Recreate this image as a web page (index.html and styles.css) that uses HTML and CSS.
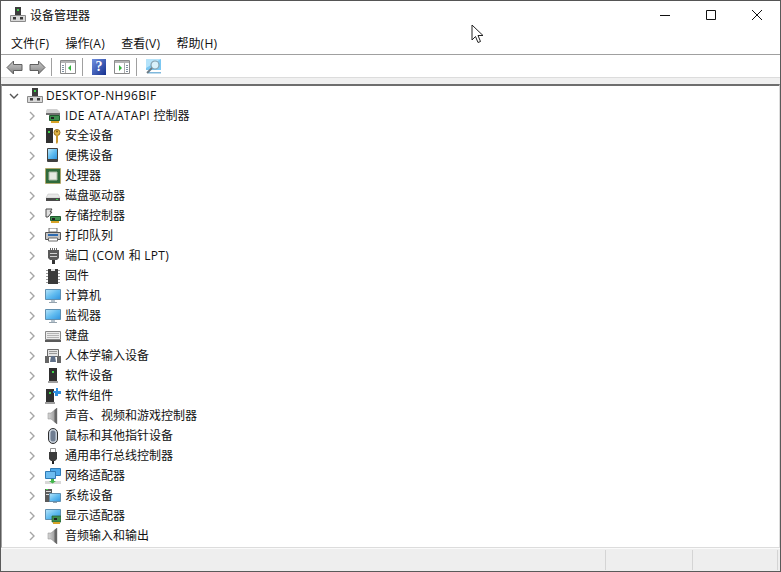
FILE: index.html
```html
<!DOCTYPE html>
<html lang="zh-CN">
<head>
<meta charset="utf-8">
<title>设备管理器</title>
<link rel="stylesheet" href="styles.css">
</head>
<body>
<svg class="sprite" width="0" height="0">
<defs>
<linearGradient id="gArrow" x1="0" y1="0" x2="0" y2="1"><stop offset="0" stop-color="#c4c4c4"/><stop offset=".5" stop-color="#a8a8a8"/><stop offset="1" stop-color="#7c7c7c"/></linearGradient>
<linearGradient id="gScreen" x1="0" y1="0" x2="1" y2="1"><stop offset="0" stop-color="#b9e6fb"/><stop offset=".5" stop-color="#63bdf0"/><stop offset="1" stop-color="#2f94e0"/></linearGradient>
<linearGradient id="gSpk" x1="0" y1="0" x2="1" y2="0"><stop offset="0" stop-color="#d8d8d8"/><stop offset="1" stop-color="#8a8a8a"/></linearGradient>
<linearGradient id="gHelp" x1="0" y1="0" x2="1" y2="1"><stop offset="0" stop-color="#6f8fe0"/><stop offset="1" stop-color="#15308f"/></linearGradient>
<symbol id="chev" viewBox="0 0 10 10"><path d="M3 1l4 4-4 4" fill="none" stroke="#a6a6a6" stroke-width="1.400"/></symbol>
<symbol id="pc" viewBox="0 0 16 16"><path d="M5 0h6v8H5z" fill="#3d3d3d"/><path d="M7 2h2v2H7z" fill="#3fd24a"/><path d="M.5 8.500h15v6H.5z" fill="#d8d8d8" stroke="#8a8a8a"/><path d="M3 10h3v2.500H3zM10 10h3v2.500h-3z" fill="#3a3a3a"/></symbol>
<symbol id="ide" viewBox="0 0 16 16"><path d="M2 1h10l3 3v1H1V3z" fill="#d0d0d0"/><path d="M1 5h14v2H1z" fill="#707070"/><path d="M4.500 7.500h10v5h-10z" fill="#3f8f4f" stroke="#205c2f"/><path d="M6 9h3v2H6z" fill="#222"/><path d="M6 13h8v2H6z" fill="#d8a428"/></symbol>
<symbol id="sec" viewBox="0 0 16 16"><path d="M1 0h7v15H1z" fill="#2f2f2f"/><path d="M3 3h2v2H3z" fill="#3fd24a"/><circle cx="12" cy="4.500" r="3" fill="#e2b445" stroke="#96701e"/><circle cx="12" cy="3.500" r="1" fill="#7a5a14"/><path d="M11 7h2v7l-1 2-1-1z" fill="#c9962c"/></symbol>
<symbol id="port" viewBox="0 0 16 16"><rect x="2" y="0" width="11" height="14" rx="1" fill="#404040"/><path d="M3 1h9v10H3z" fill="url(#gScreen)"/></symbol>
<symbol id="cpu" viewBox="0 0 16 16"><path d="M.5.500h15v15H.5z" fill="#2f6a3b" stroke="#c09a3c" stroke-dasharray="1 1"/><path d="M1.500 1.500h13v13h-13z" fill="#2f6a3b"/><path d="M4 4h8v8H4z" fill="#e6eae2" stroke="#a8b8a5"/></symbol>
<symbol id="disk" viewBox="0 0 16 16"><path d="M3 6h10l2 4H1z" fill="#e8e8e8" stroke="#bbb" stroke-width=".5"/><path d="M1 10h14v3H1z" fill="#4a4a4a"/><path d="M11 11h2v1h-2z" fill="#3fd24a"/></symbol>
<symbol id="stor" viewBox="0 0 16 16"><path d="M1 1h6L5 4h2L3 9H1z" fill="#e0e0e0" stroke="#4a4a4a"/><path d="M5.500 8.500h10v4h-10z" fill="#3f8f4f" stroke="#205c2f"/><path d="M6 13h8v2H6z" fill="#d8a428"/><path d="M7 10h3v2H7z" fill="#222"/></symbol>
<symbol id="print" viewBox="0 0 16 16"><path d="M4 0h8v4H4z" fill="#fff" stroke="#6a6a6a"/><path d="M.5 4.500h15v7h-15z" fill="#c4c4c4" stroke="#555"/><path d="M3 6h10v2H3z" fill="#2e6bb0"/><path d="M3.500 10h9v3h-9z" fill="#fff" stroke="#6a6a6a"/></symbol>
<symbol id="com" viewBox="0 0 16 16"><path d="M5 0h1v2H5zM7 0h1v2H7zM9 0h1v2H9zM11 0h1v2h-1z" fill="#666"/><path d="M3 2h11v8l-2 2H5l-2-2z" fill="#5a5a5a"/><path d="M5 5h7v1H5zM5 8h7v1H5z" fill="#d0d0d0"/><path d="M7 12h3v4H7z" fill="#333"/></symbol>
<symbol id="fw" viewBox="0 0 16 16"><path d="M3 1h10v15H3z" fill="#3a3a3a"/><path d="M1 2h2v1H1zM1 5h2v1H1zM1 8h2v1H1zM1 11h2v1H1zM1 14h2v1H1zM13 2h2v1h-2zM13 5h2v1h-2zM13 8h2v1h-2zM13 11h2v1h-2zM13 14h2v1h-2z" fill="#9a9a9a"/><path d="M6 1h4v2H6z" fill="#e0e0e0"/></symbol>
<symbol id="mon" viewBox="0 0 16 16"><path d="M.5 1.500h15v10H.5z" fill="url(#gScreen)" stroke="#5f8fb0"/><path d="M6 12h4v2H6z" fill="#b5c2cc"/><path d="M4 14h8v1H4z" fill="#95a3ae"/></symbol>
<symbol id="kbd" viewBox="0 0 16 16"><path d="M.5 3.500h15v8H.5z" fill="#ececec" stroke="#888"/><path d="M2 5h12v1H2zM2 7h12v1H2zM2 9h12v1H2z" fill="#b4b4b4"/><path d="M0 12h16v2H0z" fill="#5a5a5a"/></symbol>
<symbol id="hid" viewBox="0 0 16 16"><path d="M2.500 1.500h11v7h-11z" fill="#e4e4e4" stroke="#6a6a6a"/><path d="M4 3h8v1H4zM4 5h8v1H4z" fill="#999"/><path d="M0 8h4v7H0zM12 8h4v7h-4z" fill="#666"/><path d="M6 8h4l1 6H5z" fill="#5f6f88"/></symbol>
<symbol id="sw" viewBox="0 0 16 16"><path d="M4 0h8v13H4z" fill="#2f2f2f"/><path d="M7 3h2v2H7z" fill="#3fd24a"/><path d="M3 13h10v2H3z" fill="#a0a0a0"/></symbol>
<symbol id="swc" viewBox="0 0 16 16"><path d="M1 1h8v13H1z" fill="#2f2f2f"/><path d="M4 4h2v2H4z" fill="#3fd24a"/><path d="M0 14h10v2H0z" fill="#a0a0a0"/><path d="M11 0h2v3h3v3h-3v2h-3V5H8V3h3z" fill="#2f8fe0"/></symbol>
<symbol id="spk" viewBox="0 0 16 16"><path d="M3 5h3l6-5v16l-6-5H3z" fill="url(#gSpk)" stroke="#888" stroke-width=".5"/><path d="M9.500 2L12 0v16l-2.500-2z" fill="#666"/></symbol>
<symbol id="mouse" viewBox="0 0 16 16"><rect x="3.500" y=".500" width="9" height="15" rx="4.500" fill="#c8d0da" stroke="#2f2f2f"/><rect x="5.500" y="2.500" width="5" height="11" rx="2.500" fill="#6f7d91"/></symbol>
<symbol id="usb" viewBox="0 0 16 16"><path d="M5.500.5h5v4h-5z" fill="#fff" stroke="#777" stroke-width=".8"/><path d="M4 4h8v7l-2 2H6l-2-2z" fill="#3b3b3b"/><path d="M7 13h2v3H7z" fill="#222"/></symbol>
<symbol id="net" viewBox="0 0 16 16"><path d="M5.500.5h10v7h-10z" fill="#4ba8ea" stroke="#2f7ab5"/><path d="M.5 3.500h10v7h-10z" fill="#6cbcf0" stroke="#2f7ab5"/><path d="M0 13h16v3H0z" fill="#d8d8d8"/><path d="M6 11h3v2h2l-3.500 2.500L4 13h2z" fill="#42b54a"/></symbol>
<symbol id="sys" viewBox="0 0 16 16"><path d="M0 1h7v13H0z" fill="#5a5a5a"/><path d="M1 3h5v1H1zM1 6h3v1H1z" fill="#ddd"/><path d="M1 1h2v1H1z" fill="#3fd24a"/><path d="M4.500 5.500h11v8h-11z" fill="url(#gScreen)" stroke="#5f8fb0"/><path d="M8 14h4v1H8z" fill="#95a3ae"/></symbol>
<symbol id="gpu" viewBox="0 0 16 16"><path d="M.5 1.500h15v10H.5z" fill="url(#gScreen)" stroke="#5f8fb0"/><path d="M7 8h9v6H7z" fill="#3f8f4f" stroke="#205c2f" stroke-width=".7"/><path d="M9 10h3v2H9z" fill="#222"/><path d="M8 14h7v2H8z" fill="#d8a428"/></symbol>
<symbol id="back" viewBox="0 0 17 15"><path d="M7.500 1L1 7.500 7.500 14v-3.500h8.500v-6H7.500z" fill="url(#gArrow)" stroke="#5f5f5f"/></symbol>
<symbol id="fwd" viewBox="0 0 17 15"><path d="M9.500 1L16 7.500 9.500 14v-3.500H1v-6h8.500z" fill="url(#gArrow)" stroke="#5f5f5f"/></symbol>
<symbol id="pane" viewBox="0 0 16 16"><path d="M.5 1.500h15v13H.5z" fill="#fff" stroke="#8a8a8a"/><path d="M1 2h14v2H1z" fill="#b4b4b4"/><path d="M2 6h2v1H2zM2 8h2v1H2zM2 10h2v1H2zM2 12h2v1H2z" fill="#7f8f9f"/><path d="M5.500 4v10" stroke="#aaa"/><path d="M11 6v6L8 9z" fill="#32b43c"/></symbol>
<symbol id="pane2" viewBox="0 0 16 16"><path d="M.5 1.500h15v13H.5z" fill="#fff" stroke="#8a8a8a"/><path d="M1 2h14v2H1z" fill="#b4b4b4"/><path d="M12 6h2v1h-2zM12 8h2v1h-2zM12 10h2v1h-2zM12 12h2v1h-2z" fill="#7f8f9f"/><path d="M10.500 4v10" stroke="#aaa"/><path d="M5 6v6l3-3z" fill="#32b43c"/></symbol>
<symbol id="help" viewBox="0 0 14 16"><path d="M0 0h14v16H0z" fill="url(#gHelp)"/></symbol>
<symbol id="scan" viewBox="0 0 17 16"><path d="M1 0h15v11H1z" fill="#7cc8f2"/><path d="M1 0h15L1 9z" fill="#b5e3fa"/><path d="M3 13h13v1.500H3z" fill="#7fb8dc"/><circle cx="10" cy="6" r="4" fill="#d9f1fb" stroke="#84a0ae" stroke-width="1.200"/><path d="M7 9l-5 5" stroke="#6a7a84" stroke-width="1.800"/></symbol>
<symbol id="cursor" viewBox="0 0 13 20"><path d="M1 1v15l3.500-3.500 2.500 6 2.500-1-2.500-6H12z" fill="#fff" stroke="#222" stroke-width="1"/></symbol>
</defs>
</svg>
<div class="window">
  <header class="titlebar">
    <svg class="title-icon"><use href="#pc"/></svg>
    <span class="title">设备管理器</span>
    <svg class="winbtn" viewBox="0 0 46 12"><path d="M18 6.500h10" stroke="#111" fill="none"/></svg>
    <svg class="winbtn" viewBox="0 0 46 12"><path d="M18.500 1.500h9v9h-9z" stroke="#111" fill="none"/></svg>
    <svg class="winbtn" viewBox="0 0 46 12"><path d="M18 1l10 10M28 1L18 11" stroke="#111" fill="none"/></svg>
  </header>
  <nav class="menubar">
    <span class="menu">文件<span class="lat">(F)</span></span>
    <span class="menu">操作<span class="lat">(A)</span></span>
    <span class="menu">查看<span class="lat">(V)</span></span>
    <span class="menu">帮助<span class="lat">(H)</span></span>
  </nav>
  <div class="toolbar">
    <svg class="tool arrow"><use href="#back"/></svg>
    <svg class="tool arrow last"><use href="#fwd"/></svg>
    <i class="sep"></i>
    <svg class="tool"><use href="#pane"/></svg>
    <i class="sep"></i>
    <span class="helpbtn"><svg class="helpbg"><use href="#help"/></svg><b class="q">?</b></span>
    <svg class="tool"><use href="#pane2"/></svg>
    <i class="sep"></i>
    <svg class="tool scan"><use href="#scan"/></svg>
  </div>
  <div class="band"></div>
  <main class="tree">
    <div class="row root"><svg class="chev" viewBox="0 0 10 10"><path d="M1 3l4 4 4-4" fill="none" stroke="#555" stroke-width="1.400"/></svg><svg class="ico"><use href="#pc"/></svg><span class="label lat">DESKTOP-NH96BIF</span></div>
    <div class="row"><svg class="chev"><use href="#chev"/></svg><svg class="ico"><use href="#ide"/></svg><span class="label"><span class="lat">IDE ATA/ATAPI </span>控制器</span></div>
    <div class="row"><svg class="chev"><use href="#chev"/></svg><svg class="ico"><use href="#sec"/></svg><span class="label">安全设备</span></div>
    <div class="row"><svg class="chev"><use href="#chev"/></svg><svg class="ico"><use href="#port"/></svg><span class="label">便携设备</span></div>
    <div class="row"><svg class="chev"><use href="#chev"/></svg><svg class="ico"><use href="#cpu"/></svg><span class="label">处理器</span></div>
    <div class="row"><svg class="chev"><use href="#chev"/></svg><svg class="ico"><use href="#disk"/></svg><span class="label">磁盘驱动器</span></div>
    <div class="row"><svg class="chev"><use href="#chev"/></svg><svg class="ico"><use href="#stor"/></svg><span class="label">存储控制器</span></div>
    <div class="row"><svg class="chev"><use href="#chev"/></svg><svg class="ico"><use href="#print"/></svg><span class="label">打印队列</span></div>
    <div class="row"><svg class="chev"><use href="#chev"/></svg><svg class="ico"><use href="#com"/></svg><span class="label">端口<span class="lat"> (COM </span>和<span class="lat"> LPT)</span></span></div>
    <div class="row"><svg class="chev"><use href="#chev"/></svg><svg class="ico"><use href="#fw"/></svg><span class="label">固件</span></div>
    <div class="row"><svg class="chev"><use href="#chev"/></svg><svg class="ico"><use href="#mon"/></svg><span class="label">计算机</span></div>
    <div class="row"><svg class="chev"><use href="#chev"/></svg><svg class="ico"><use href="#mon"/></svg><span class="label">监视器</span></div>
    <div class="row"><svg class="chev"><use href="#chev"/></svg><svg class="ico"><use href="#kbd"/></svg><span class="label">键盘</span></div>
    <div class="row"><svg class="chev"><use href="#chev"/></svg><svg class="ico"><use href="#hid"/></svg><span class="label">人体学输入设备</span></div>
    <div class="row"><svg class="chev"><use href="#chev"/></svg><svg class="ico"><use href="#sw"/></svg><span class="label">软件设备</span></div>
    <div class="row"><svg class="chev"><use href="#chev"/></svg><svg class="ico"><use href="#swc"/></svg><span class="label">软件组件</span></div>
    <div class="row"><svg class="chev"><use href="#chev"/></svg><svg class="ico"><use href="#spk"/></svg><span class="label">声音、视频和游戏控制器</span></div>
    <div class="row"><svg class="chev"><use href="#chev"/></svg><svg class="ico"><use href="#mouse"/></svg><span class="label">鼠标和其他指针设备</span></div>
    <div class="row"><svg class="chev"><use href="#chev"/></svg><svg class="ico"><use href="#usb"/></svg><span class="label">通用串行总线控制器</span></div>
    <div class="row"><svg class="chev"><use href="#chev"/></svg><svg class="ico"><use href="#net"/></svg><span class="label">网络适配器</span></div>
    <div class="row"><svg class="chev"><use href="#chev"/></svg><svg class="ico"><use href="#sys"/></svg><span class="label">系统设备</span></div>
    <div class="row"><svg class="chev"><use href="#chev"/></svg><svg class="ico"><use href="#gpu"/></svg><span class="label">显示适配器</span></div>
    <div class="row"><svg class="chev"><use href="#chev"/></svg><svg class="ico"><use href="#spk"/></svg><span class="label">音频输入和输出</span></div>
  </main>
  <footer class="status">
    <div class="cell grow"></div>
    <div class="cell mid"></div>
    <div class="cell end"></div>
  </footer>
</div>
<svg class="cursor"><use href="#cursor"/></svg>
</body>
</html>
```
FILE: styles.css
```css
* { box-sizing: border-box; }
html, body { margin: 0; padding: 0; }
body {
  width: 781px;
  height: 572px;
  overflow: hidden;
  background: #fff;
  font-family: "Open Sans", "Noto Sans CJK SC", sans-serif;
  font-size: 12px;
  color: #111;
  position: relative;
}
.sprite { position: absolute; }
.lat { letter-spacing: .36px; }
.window {
  width: 781px;
  height: 572px;
  display: flex;
  flex-direction: column;
  border: 1px solid #5a5a5a;
  border-top-color: #555;
  background: #fff;
}
.titlebar {
  height: 33px;
  flex: none;
  display: flex;
  align-items: center;
  padding: 0 0 5px 9px;
}
.title-icon { width: 16px; height: 16px; margin-right: 4px; }
.title { flex: 1; font-size: 12px; }
.winbtn { width: 46px; height: 12px; }
.menubar {
  height: 21px;
  flex: none;
  display: flex;
  align-items: center;
  gap: 16px;
  padding: 0 0 3px 10px;
  border-bottom: 1px solid #a0a0a0;
}
.menu { font-size: 12px; }
.toolbar {
  height: 23px;
  flex: none;
  display: flex;
  align-items: center;
  padding: 2px 0 0 5px;
  border-bottom: 1px solid #dcdcdc;
}
.tool { width: 16px; height: 16px; margin-right: 6px; flex: none; }
.tool.arrow { width: 17px; height: 15px; }
.tool.arrow.last { margin-right: 5px; }
.tool.scan { width: 17px; height: 16px; }
.sep { width: 1px; height: 18px; background: #a0a0a0; margin-right: 8px; flex: none; }
.helpbtn { width: 14px; height: 16px; position: relative; margin: 0 8px 0 1px; flex: none; display: block; }
.helpbg { width: 14px; height: 16px; display: block; }
.q { position: absolute; inset: 0; text-align: center; color: #fff; font: bold 14px/16px "Liberation Serif", serif; }
.band { height: 6px; flex: none; background: #f0f0f0; }
.tree {
  flex: 1;
  min-height: 0;
  border-top: 2px solid #6e6e6e;
  border-left: 1px solid #a0a0a0;
  border-right: 1px solid #dcdcdc;
  border-bottom: 1px solid #dcdcdc;
  overflow: hidden;
}
.row { height: 20px; display: flex; align-items: center; padding-left: 25px; white-space: nowrap; }
.row.root { padding-left: 7px; }
.label { padding-bottom: 2px; }
.chev { width: 10px; height: 10px; margin-right: 8px; flex: none; }
.ico { width: 16px; height: 16px; margin-right: 4px; flex: none; }
.row.root .ico { margin-right: 3px; }
.status {
  height: 23px;
  flex: none;
  display: flex;
  background: #eeeeee;
  border-top: 1px solid #fafafa;
  padding-right: 2px;
}
.cell { height: 20px; margin-top: 1px; border-right: 1px solid #d4d4d4; }
.grow { flex: 1; }
.mid { width: 87px; }
.end { width: 85px; }
.cursor { position: absolute; left: 471px; top: 24px; width: 13px; height: 20px; }
```
